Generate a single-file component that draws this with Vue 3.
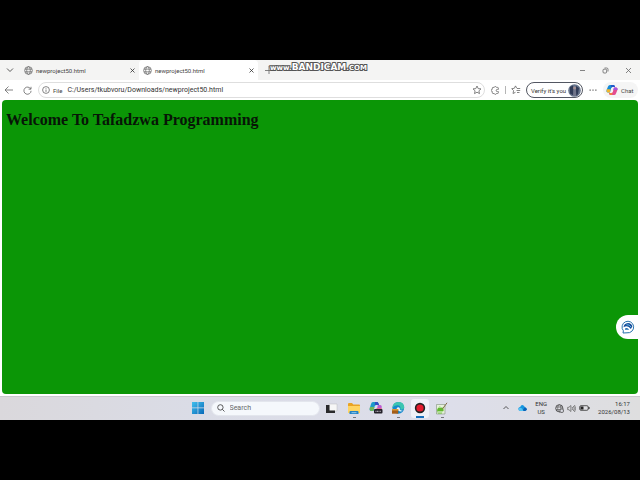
<template>
  <div class="screen">
    <div class="browser">
      <!-- Tab strip -->
      <div class="tab-strip">
        <button class="icon-btn tab-menu" aria-label="Tab actions">
          <svg width="8" height="8" viewBox="0 0 8 8"><path d="M1 2.5 4 5.5 7 2.5" class="line dark" /></svg>
        </button>
        <div v-for="tab in tabs" :key="tab.id" class="tab" :class="{ active: tab.id === activeTab }">
          <button class="tab-title" @click="activeTab = tab.id">
            <svg width="9" height="9" viewBox="0 0 10 10">
              <circle cx="5" cy="5" r="4.3" class="line" />
              <ellipse cx="5" cy="5" rx="2" ry="4.3" class="line" />
              <path d="M1 3.5h8M1 6.5h8" class="line" />
            </svg>
            <span>{{ tab.title }}</span>
          </button>
          <button class="icon-btn tab-close" aria-label="Close tab">
            <svg width="5" height="5" viewBox="0 0 5 5"><path d="M.5.5l4 4M4.5.5l-4 4" class="line dark" /></svg>
          </button>
        </div>
        <button class="icon-btn new-tab" aria-label="New tab">
          <svg width="8" height="8" viewBox="0 0 8 8"><path d="M4 0v8M0 4.5h8" class="line" /></svg>
        </button>
        <div class="watermark"><span>www.</span><b>BANDICAM</b><span>.COM</span></div>
        <div class="window-buttons">
          <button class="icon-btn" aria-label="Minimize">
            <svg width="7" height="7" viewBox="0 0 7 7"><path d="M1 3.5h5" class="line" /></svg>
          </button>
          <button class="icon-btn" aria-label="Restore">
            <svg width="7" height="7" viewBox="0 0 7 7">
              <rect x="1" y="2.2" width="3.6" height="3.8" rx="1" class="line" />
              <path d="M2.5 1h2.2q1.3 0 1.3 1.3v2.2" class="line" />
            </svg>
          </button>
          <button class="icon-btn" aria-label="Close">
            <svg width="7" height="7" viewBox="0 0 7 7"><path d="M1 1l5 5M6 1 1 6" class="line" /></svg>
          </button>
        </div>
      </div>

      <!-- Toolbar -->
      <div class="toolbar">
        <button class="icon-btn nav" aria-label="Back">
          <svg width="10" height="10" viewBox="0 0 10 10"><path d="M9 5H1M4.5 1.5 1 5l3.5 3.5" class="line" /></svg>
        </button>
        <button class="icon-btn nav" aria-label="Refresh">
          <svg width="9" height="9" viewBox="0 0 9 9"><path d="M7.7 3A3.6 3.6 0 1 0 8.1 4.8M8 .8v2.4H5.6" class="line" /></svg>
        </button>
        <div class="address">
          <svg width="8" height="8" viewBox="0 0 8 8"><circle cx="4" cy="4" r="3.4" class="line" /><path d="M4 3.5v2.4M4 2v.7" class="line" /></svg>
          <label for="url">File</label>
          <input id="url" v-model="url" type="text" spellcheck="false" />
          <button class="icon-btn" aria-label="Add to favorites">
            <svg width="10" height="10" viewBox="0 0 10 10"><path d="M5 1l1.2 2.6 2.8.3-2.1 1.9.6 2.8L5 7.2 2.5 8.6l.6-2.8L1 3.9l2.8-.3z" class="line" /></svg>
          </button>
        </div>
        <button class="icon-btn extra" aria-label="Extensions">
          <svg width="9" height="9" viewBox="0 0 9 9"><path d="M1.3 3.3V2.2q0-.8.8-.8h1.1a1.2 1.2 0 0 1 2.3 0h1q.9 0 .9.8v1.2H6.3a1.1 1.1 0 0 0 0 2.2h1.1v1q0 .9-.9.9h-1a1.2 1.2 0 0 1-2.3 0H2.1q-.8 0-.8-.9V5.5a1.1 1.1 0 0 1 0-2.2z" class="line" /></svg>
        </button>
        <span class="divider"></span>
        <button class="icon-btn extra" aria-label="Favorites">
          <svg width="10" height="10" viewBox="0 0 10 10"><path d="M5.8 3.3 4.5.9 3.3 3.3l-2.6.4 1.9 1.9L2 8.5l2.5-1.2M6 3.5h3.2M5.5 5.5h3.7M6 7.5h2.5" class="line" /></svg>
        </button>
        <button class="verify">
          <span>Verify it's you</span>
          <svg width="13" height="13" viewBox="0 0 13 13">
            <circle cx="6.5" cy="6.5" r="6.3" fill="#68758d" />
            <path d="M2 3l3-1.5.5 10L2 9.5zM8 2l3 2-1 6-2 2z" fill="#303b57" />
            <circle cx="6.6" cy="4" r="1.5" fill="#a68f91" />
            <path d="M5.5 6h2.4l.4 5.7H5z" fill="#70748a" />
          </svg>
        </button>
        <button class="icon-btn more" aria-label="Settings and more">
          <svg width="8" height="4" viewBox="0 0 8 4"><path d="M.5 1.5h1.3v1.2H.5zM3.4 1.5h1.2v1.2H3.4zM6.2 1.5h1.3v1.2H6.2z" fill="#666" /></svg>
        </button>
        <button class="chat">
          <svg width="12" height="12" viewBox="0 0 12 12">
            <path d="M4 1h3.4q1 0 1.3 1l.3 1H6.5q-1 0-1.3 1L4 8.5H2Q0 8.5.6 6L2 2.5Q2.5 1 4 1z" fill="#158bd8" />
            <path d="M.8 5.3h3.7L3.8 8.5H2Q0 8.5.8 5.3z" fill="#f1b72c" />
            <path d="M5 1h2.4q1 0 1.3 1l.3 1H6.5q-1 0-1.3 1z" fill="#2457c9" />
            <path d="M8 11H4.6q-1 0-1.3-1L3 9h2.5q1 0 1.3-1L8 3.5h2q2 0 1.4 2.5L10 9.5Q9.5 11 8 11z" fill="#e34c91" />
            <path d="M7.8 4 8 3.5h2q2 0 1.4 2.5H7.3z" fill="#a656dd" />
            <path d="M3 9h2.5q1 0 1.3-1L6 11H4.6q-1 0-1.3-1z" fill="#f07b45" />
          </svg>
          <span>Chat</span>
        </button>
      </div>

      <!-- Page -->
      <main class="page">
        <h1>Welcome To Tafadzwa Programming</h1>
        <button class="assistant" aria-label="Open assistant">
          <svg width="14" height="14" viewBox="0 0 14 14">
            <path d="M2.4 10.8A5.8 5.8 0 1 1 6 12.8L2 13z" fill="#fff" stroke="#2671ab" />
            <path d="M2.5 7.3Q3 3.5 7 3q3.5 0 4.4 3.5L9.8 9Q7 4.8 2.5 7.3z" fill="#174c9b" />
            <path d="M4 8.4q2.5-1.5 4.2 1.3H4z" fill="#2269ae" />
            <path d="M5.5 4.7q3-.5 4.6 2.5" fill="none" stroke="#68b7df" />
          </svg>
        </button>
      </main>
    </div>

    <!-- Taskbar -->
    <footer class="taskbar">
      <div class="apps">
        <button class="start" aria-label="Start">
          <svg width="12" height="12" viewBox="0 0 12 12">
            <defs><linearGradient id="win" x2="1" y2="1"><stop stop-color="#42c0ed" /><stop offset="1" stop-color="#0869b8" /></linearGradient></defs>
            <path d="M0 0h5.6v5.6H0zM6.3 0H12v5.6H6.3zM0 6.3h5.6V12H0zM6.3 6.3H12V12H6.3z" fill="url(#win)" />
          </svg>
        </button>
        <div class="search">
          <label for="search" aria-label="Search">
            <svg width="8" height="8" viewBox="0 0 8 8"><circle cx="3.4" cy="3.4" r="2.7" class="line dark" /><path d="M5.4 5.4 7.5 7.5" class="line dark" /></svg>
          </label>
          <input id="search" v-model="query" type="text" placeholder="Search" />
        </div>
        <button v-for="app in apps" :key="app.id" class="app" :class="app.state" :aria-label="app.name">
          <svg v-if="app.id === 'view'" width="13" height="13" viewBox="0 0 13 13">
            <path d="M4 2h8v7H4z" fill="#f7f7f7" stroke="#b9b9bd" stroke-width=".5" />
            <path d="M1 3h3.5v5.5H10V11H1z" fill="#29292b" />
          </svg>
          <svg v-else-if="app.id === 'files'" width="14" height="13" viewBox="0 0 14 13">
            <path d="M1 2q0-1 1-1h3l1.3 1.4H12q1 0 1 1V11H1z" fill="#e9a323" />
            <path d="M1 4h12v7H1z" fill="#ffd461" />
            <path d="M3.5 9h7q1 0 1 1v2h-9v-2q0-1 1-1z" fill="#2583c7" />
            <path d="M4.5 10.7h5" stroke="#94cce9" />
          </svg>
          <svg v-else-if="app.id === 'copilot'" width="14" height="14" viewBox="0 0 14 14">
            <path d="M4 1h4q1 0 1.5 1.4L10 4H7Q6 4 5.7 5L4.5 10H2.3Q0 10 .8 7L2 3Q2.5 1 4 1z" fill="#1d9bc9" />
            <path d="M6 1h2q1 0 1.5 1.4L10 4H7Q6 4 5.7 5z" fill="#304fc4" />
            <path d="M1 6h4.4l-1 4H2.3Q0 10 1 6z" fill="#72b85a" />
            <path d="M8.8 4H11q2.3 0 1.6 3L12 10H4.5h2q1 0 1.3-1z" fill="#bd5bd2" />
            <path d="M8 7h4.6L12 10H5z" fill="#ef678a" />
            <rect x="5" y="8" width="8.5" height="4.5" rx="1" fill="#24222a" />
            <path d="M6.5 10.3h5.3" stroke="#c9c4cc" stroke-dasharray="1 .5" />
          </svg>
          <svg v-else-if="app.id === 'edge'" width="14" height="14" viewBox="0 0 14 14">
            <circle cx="7.3" cy="6.8" r="5.9" fill="#1688cc" />
            <path d="M1.4 7Q1.8 1 7.3 1q5.7 0 6 5.3-.3 3-4 2.3Q10.2 4.5 6.5 4.3 3 4.2 1.4 7z" fill="#3cc5b0" />
            <path d="M5.5 7.5Q7 5.3 8.8 7q-.6 2.5 3 2.7Q8.5 12 5.5 7.5z" fill="#eaf5f8" />
            <path d="M1 8h6.2v4.7H1z" fill="#a45d18" /><path d="M1 8h6.2v1.5H1z" fill="#db9a35" />
          </svg>
          <svg v-else-if="app.id === 'record'" width="14" height="14" viewBox="0 0 14 14">
            <circle cx="7" cy="7" r="5.2" fill="#222" /><circle cx="7" cy="7" r="3.6" fill="#e51b2d" />
          </svg>
          <svg v-else width="13" height="13" viewBox="0 0 13 13">
            <path d="M1.5 2.5H10V12H1.5z" fill="#e6f0d9" stroke="#82927d" stroke-width=".6" />
            <path d="M2 8l2-4 3 1 1.8 3-2 3.5H3z" fill="#62b92e" />
            <path d="M3 5h4M3 10h5" stroke="#fff" /><path d="M12 .8 7.5 7" stroke="#806c45" />
          </svg>
        </button>
      </div>

      <div class="tray">
        <button class="icon-btn" aria-label="Show hidden icons">
          <svg width="8" height="8" viewBox="0 0 8 8"><path d="M1.5 5 4 2.5 6.5 5" class="line dark" /></svg>
        </button>
        <svg width="9" height="8" viewBox="0 0 9 8">
          <path d="M2.3 7Q.3 6.8.3 4.8.5 3 2.2 2.9 3 .7 5 1.2q1.5.3 1.8 2 1.9.3 1.9 2Q8.5 7 6.8 7z" fill="#1595df" />
          <path d="M4.2 7 6.8 3.2q1.9.3 1.9 2Q8.5 7 6.8 7z" fill="#0b60b7" />
          <path d="M.5 4.5q3-2.5 5 2.5H2.3Q.4 6.8.5 4.5z" fill="#53c3f3" />
        </svg>
        <div class="lang"><span>ENG</span><span>US</span></div>
        <div class="status">
          <svg width="9" height="9" viewBox="0 0 9 9">
            <circle cx="4.3" cy="4.3" r="3.6" class="line dark" /><ellipse cx="4.3" cy="4.3" rx="1.6" ry="3.6" class="line" />
            <path d="M1 3h6.7M1 5.6h4" class="line" />
            <rect x="5" y="5" width="3.4" height="3.4" rx="1" fill="#dcdde5" stroke="#333" stroke-width=".7" />
          </svg>
          <svg width="9" height="9" viewBox="0 0 9 9"><path d="M.7 3.3h1.2l2-1.8v6l-2-1.8H.7zM5.2 3q1 1.5 0 3M6.4 2q1.8 2.5 0 5M7.5 1q2.2 3.5 0 7" class="line" /></svg>
          <svg width="11" height="8" viewBox="0 0 11 8"><rect x=".7" y="1.7" width="8.5" height="4.6" rx="1.3" class="line dark" /><path d="M1.5 2.5h3v3h-3zM9.5 3h1v2h-1z" fill="#222" /></svg>
        </div>
        <div class="clock"><time>16:17</time><time>2026/08/13</time></div>
      </div>
    </footer>
  </div>
</template>

<script setup>
import { ref } from 'vue';

const tabs = [
  { id: 1, title: 'newproject50.html' },
  { id: 2, title: 'newproject50.html' },
];
const activeTab = ref(2);
const url = ref('C:/Users/tkubvoru/Downloads/newproject50.html');
const query = ref('');

const apps = [
  { id: 'view', name: 'Task view', state: '' },
  { id: 'files', name: 'File Explorer', state: 'open' },
  { id: 'copilot', name: 'Microsoft 365 Copilot', state: '' },
  { id: 'edge', name: 'Microsoft Edge', state: 'open' },
  { id: 'record', name: 'Bandicam', state: 'current' },
  { id: 'notes', name: 'Notepad++', state: 'open' },
];
</script>

<style>
body {
  margin: 0;
  background: #000;
}
</style>

<style scoped>
.screen {
  display: flex;
  flex-direction: column;
  box-sizing: border-box;
  min-height: 100vh;
  padding: 60px 0;
  background: #000;
  color: #444;
  font-family: Roboto, "Noto Sans", sans-serif;
  font-size: 6px;
}
button,
input {
  margin: 0;
  padding: 0;
  border: 0;
  background: none;
  color: inherit;
  font: inherit;
}
svg {
  display: block;
  flex: none;
}
.line {
  fill: none;
  stroke: #666;
  stroke-width: 0.8;
}
.line.dark {
  stroke: #333;
}
.icon-btn {
  display: flex;
  align-items: center;
  justify-content: center;
  flex: none;
}
.browser {
  display: flex;
  flex-direction: column;
  flex: 1;
  background: #fff;
}
.tab-strip {
  position: relative;
  display: flex;
  align-items: stretch;
  height: 20px;
  background: #f4f4f3;
}
.tab-menu {
  width: 20px;
}
.tab {
  display: flex;
  align-items: center;
  width: 119px;
  border-radius: 4px 4px 0 0;
}
.tab.active {
  background: #fff;
}
.tab-title {
  display: flex;
  flex: 1;
  align-items: center;
  gap: 3px;
  padding-left: 4px;
}
.tab-close {
  width: 14px;
  height: 14px;
}
.new-tab {
  width: 22px;
}
/* Recorder stamp over the tab strip */
.watermark {
  position: absolute;
  left: 270px;
  top: 2px;
  color: #fff;
  font: bold 7px/10px "DejaVu Sans", sans-serif;
  -webkit-text-stroke: 2px #555;
  paint-order: stroke fill;
  white-space: nowrap;
}
.watermark b {
  font-size: 9px;
}
.window-buttons {
  display: flex;
  margin-left: auto;
}
.window-buttons button {
  width: 23px;
}
.toolbar {
  display: flex;
  align-items: center;
  height: 20px;
  padding-right: 2px;
}
.nav {
  width: 18px;
}
.address {
  display: flex;
  flex: 1;
  align-items: center;
  box-sizing: border-box;
  height: 16px;
  margin-left: 2px;
  padding: 0 2px 0 3px;
  border: 1px solid #dedede;
  border-radius: 8px;
}
.address label {
  margin: 0 5px 0 3px;
}
.address input {
  flex: 1;
  min-width: 0;
  color: #333;
  font-size: 7px;
  outline: none;
}
.extra {
  width: 20px;
}
.divider {
  width: 1px;
  height: 8px;
  background: #b5b5b5;
}
.verify {
  display: flex;
  align-items: center;
  justify-content: space-between;
  box-sizing: border-box;
  width: 57px;
  height: 16px;
  padding: 0 1px 0 4px;
  border: 1px solid #535762;
  border-radius: 8px;
  color: #333;
  white-space: nowrap;
}
.more {
  width: 20px;
}
.chat {
  display: flex;
  align-items: center;
  gap: 3px;
  box-sizing: border-box;
  width: 35px;
  height: 16px;
  padding: 0 3px;
  border-radius: 8px;
  background: #f5f5f5;
}
.page {
  position: relative;
  flex: 1;
  margin: 0 2px 2px;
  padding: 11px 4px;
  border-radius: 4px;
  background: #0b9606;
}
h1 {
  margin: 0;
  color: #071507;
  font: bold 16px/18px "Liberation Serif", serif;
}
.assistant {
  position: absolute;
  right: -2px;
  bottom: 55px;
  display: flex;
  align-items: center;
  box-sizing: border-box;
  width: 24px;
  height: 24px;
  padding-left: 5px;
  border-radius: 12px 0 0 12px;
  background: #fff;
}
.taskbar {
  display: grid;
  grid-template-columns: 1fr auto 1fr;
  align-items: center;
  height: 24px;
  background: linear-gradient(90deg, #dad8dc, #dadce6 30%, #dddeea 70%, #dededf);
  box-shadow: inset 0 1px #c8c9cd;
}
.apps {
  display: flex;
  grid-column: 2;
  align-items: center;
  padding-left: 4px;
}
.start {
  margin-right: 7px;
}
.search {
  display: flex;
  align-items: center;
  gap: 5px;
  box-sizing: border-box;
  width: 109px;
  height: 15px;
  margin-right: 1px;
  padding: 0 5px;
  border: 1px solid #e3e6ed;
  border-radius: 8px;
  background: #f5f8fc;
}
.search input {
  flex: 1;
  min-width: 0;
  font-size: 7px;
  outline: none;
}
.search input::placeholder {
  color: #666;
}
.app {
  position: relative;
  display: flex;
  align-items: center;
  justify-content: center;
  width: 18px;
  height: 19px;
  margin: 0 2px;
  border-radius: 3px;
}
.app.open::after,
.app.current::after {
  position: absolute;
  bottom: 0;
  left: 8px;
  width: 3px;
  height: 1px;
  background: #77777d;
  content: "";
}
.app.current {
  background: #f0f1f7;
}
.app.current::after {
  left: 5px;
  width: 8px;
  height: 2px;
  background: #176fba;
}
.tray {
  display: flex;
  align-items: center;
  justify-content: flex-end;
  gap: 8px;
  padding-right: 10px;
  color: #333;
  line-height: 8px;
}
.lang,
.clock {
  display: flex;
  flex-direction: column;
  text-align: center;
}
.clock {
  text-align: right;
}
.status {
  display: flex;
  align-items: center;
  gap: 3px;
}
</style>
